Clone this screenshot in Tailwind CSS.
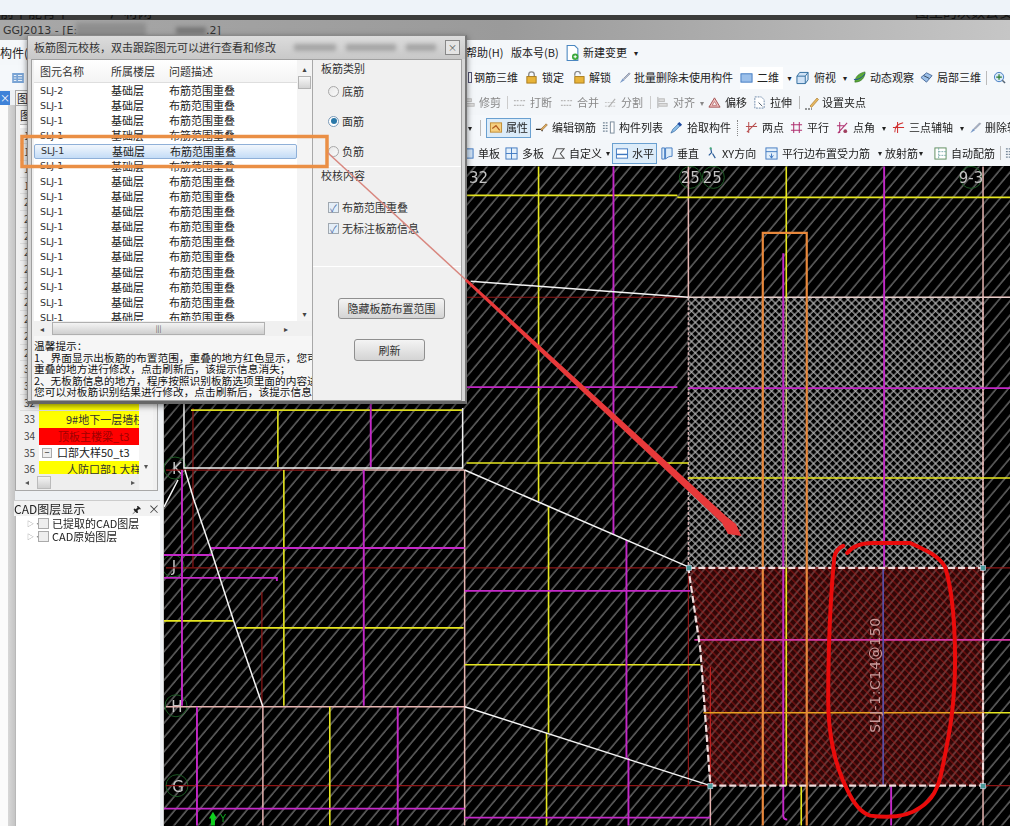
<!DOCTYPE html>
<html lang="zh-CN">
<head>
  <meta charset="UTF-8">
  <script src="https://cdn.jsdelivr.net/npm/@tailwindcss/browser@4"></script>
  <title>GGJ2013</title>
</head>
<body class="bg-[#eef3f9]">
  <!-- toolbar icon sprite -->
  <svg class="hidden">
    <symbol id="i-lock" viewBox="0 0 14 14"><path d="M4 6V4a3 3 0 0 1 6 0v2" fill="none" stroke="#888" stroke-width="1.4"/><rect x="2" y="6" width="10" height="7" fill="#e8b43a" stroke="#a87a1a"/></symbol>
    <symbol id="i-unlock" viewBox="0 0 14 14"><path d="M3 5V3.5a3 3 0 0 1 6 0" fill="none" stroke="#888" stroke-width="1.4"/><rect x="3" y="6" width="10" height="7" fill="#e8b43a" stroke="#a87a1a"/></symbol>
    <symbol id="i-brush" viewBox="0 0 14 14"><path d="M2 13l3-5 2 2z" fill="#7a9ac8"/><path d="M6 8l6-6 1 1-6 6z" fill="#b8c8de" stroke="#667"  stroke-width=".6"/></symbol>
    <symbol id="i-2d" viewBox="0 0 14 14"><rect x="1" y="3" width="12" height="9" fill="#9cc0ea" stroke="#3f78c0"/></symbol>
    <symbol id="i-box" viewBox="0 0 14 14"><path d="M1 5h9v8H1zM1 5l3-4h9l-3 4M10 13l3-4V1" fill="#cfe2f6" stroke="#2c6a9c"/></symbol>
    <symbol id="i-orbit" viewBox="0 0 14 14"><path d="M2 12C2 6 7 2 13 1c0 6-4 11-11 11z" fill="#5aa838" stroke="#2c6a20" stroke-width=".6"/><path d="M1 9c4 1 9-2 12-6" fill="none" stroke="#1c4aa0"/></symbol>
    <symbol id="i-part3d" viewBox="0 0 14 14"><path d="M1 7l6-5 6 3-6 7z" fill="#9cc0ea" stroke="#4a6a98"/><path d="M4 5l6 3" stroke="#345"/></symbol>
    <symbol id="i-zoom" viewBox="0 0 14 14"><circle cx="6.5" cy="6.5" r="5" fill="#d8e8f8" stroke="#3f78c0"/><path d="M6.500 3.500v6M3.500 6.500h6" stroke="#2a7a30" stroke-width="1.300"/><path d="M10 10l3 3" stroke="#567" stroke-width="1.600"/></symbol>
    <symbol id="i-break" viewBox="0 0 14 14"><path d="M1 5h5M8 5h5M1 10h12" stroke="#b8b8b8" stroke-dasharray="2 1" stroke-width="1.400"/></symbol>
    <symbol id="i-split" viewBox="0 0 14 14"><path d="M1 11h12M1 7h12" stroke="#c4c4c4" stroke-dasharray="2 1"/><path d="M5 12l7-9" stroke="#b0b0b0" stroke-width="1.200"/></symbol>
    <symbol id="i-align" viewBox="0 0 14 14"><path d="M2 1v12" stroke="#aaa"/><rect x="3" y="3" width="6" height="3" fill="#ddd" stroke="#bbb"/><rect x="3" y="8" width="9" height="3" fill="#ddd" stroke="#bbb"/></symbol>
    <symbol id="i-offset" viewBox="0 0 14 14"><path d="M7 2l6 10H1z" fill="#f2c0c0" stroke="#a05050"/><path d="M7 6l2.500 4h-5z" fill="#fff" stroke="#a05050" stroke-width=".7"/></symbol>
    <symbol id="i-stretch" viewBox="0 0 14 14"><path d="M2 1h7l3 3v9H2z" fill="#fff" stroke="#6a86a8" stroke-dasharray="2 1"/><path d="M6 7l4 4" stroke="#456"/></symbol>
    <symbol id="i-grip" viewBox="0 0 16 14"><path d="M1 13h7" stroke="#333" stroke-dasharray="2 1" stroke-width="1.200"/><path d="M6 10l7-8 1.500 1.500-7 8z" fill="#e8b860" stroke="#a07020" stroke-width=".6"/></symbol>
    <symbol id="i-prop" viewBox="0 0 14 14"><rect x="1" y="2" width="12" height="10" fill="#f6d080" stroke="#c08a30"/><path d="M3 8l4-3 4 5" fill="none" stroke="#b05a20" stroke-width="1.300"/></symbol>
    <symbol id="i-edit" viewBox="0 0 14 14"><path d="M1 9h6l1 2" fill="none" stroke="#222" stroke-width="1.200"/><path d="M6 9l6-6 1.300 1.300-6 6z" fill="#e0b060" stroke="#805020" stroke-width=".6"/></symbol>
    <symbol id="i-list" viewBox="0 0 14 14"><rect x="9" y="1" width="4" height="12" fill="#fff" stroke="#789"/><path d="M1 2h5M1 5h5M1 8h5M1 11h5" stroke="#789" stroke-dasharray="2 1" stroke-width="1.300"/></symbol>
    <symbol id="i-pick" viewBox="0 0 14 14"><path d="M1 13l2-4 6-6 2 2-6 6z" fill="#8cc0ea" stroke="#2a5c98" stroke-width=".7"/><path d="M8 3l2-2 3 3-2 2z" fill="#1c4aa0"/></symbol>
    <symbol id="i-twopt" viewBox="0 0 14 14"><path d="M4 1v12M1 6h12M2 12L12 2" stroke="#b85050" fill="none" stroke-width="1.100"/></symbol>
    <symbol id="i-parallel" viewBox="0 0 14 14"><path d="M4 1v12M10 1v12M1 4h12M1 10h12" stroke="#b03070" fill="none" stroke-width="1.100"/></symbol>
    <symbol id="i-angle" viewBox="0 0 14 14"><path d="M4 1v12M1 5h9M2 13L12 2" stroke="#b03070" fill="none" stroke-width="1.100"/><circle cx="10" cy="11" r="2" fill="#a04060"/></symbol>
    <symbol id="i-three" viewBox="0 0 14 14"><path d="M6 1v12M1 7h12M3 12c0-6 4-9 9-10" stroke="#d03030" fill="none" stroke-width="1.100"/></symbol>
    <symbol id="i-slab" viewBox="0 0 14 14"><rect x="1" y="2" width="12" height="10" fill="#cfe2f6" stroke="#3f78c0"/></symbol>
    <symbol id="i-multi" viewBox="0 0 14 14"><rect x="1" y="1" width="12" height="12" fill="#e4f0fb" stroke="#3f78c0"/><path d="M7 1v12M1 7h12" stroke="#3f78c0"/></symbol>
    <symbol id="i-custom" viewBox="0 0 14 14"><path d="M1 12L5 2h8l-4 5 4 5z" fill="none" stroke="#555" stroke-width="1.100"/></symbol>
    <symbol id="i-horiz" viewBox="0 0 14 14"><rect x="1" y="2" width="12" height="10" fill="#fff" stroke="#3f78c0"/><path d="M1 8h12" stroke="#3f78c0" stroke-width="1.500"/></symbol>
    <symbol id="i-vert" viewBox="0 0 14 14"><path d="M2 1h3v12H2zM6 1h7v9c-3 0-5 1-7 3z" fill="#dcecfa" stroke="#3f78c0"/></symbol>
    <symbol id="i-xy" viewBox="0 0 14 14"><path d="M5 1l1 5-3 3M7 7l3 5" fill="none" stroke="#2a5c98" stroke-width="1.300"/><circle cx="5" cy="1.500" r="1.200" fill="#4a7"/></symbol>
    <symbol id="i-edge" viewBox="0 0 14 14"><rect x="1" y="1" width="12" height="12" fill="#e4f0fb" stroke="#3f78c0"/><path d="M1 5h12M7 7v5M5 9l2 3 2-3" stroke="#3f78c0" fill="none"/></symbol>
    <symbol id="i-auto" viewBox="0 0 14 14"><rect x="1" y="1" width="12" height="12" fill="#fff" stroke="#5a8a5a"/><path d="M5 1v12M5 5h8M5 9h8" stroke="#7aa" stroke-dasharray="2 1"/></symbol>
    <symbol id="i-new" viewBox="0 0 14 14"><path d="M2 0h7l3 3v11H2z" fill="#fff" stroke="#4a86c0"/><circle cx="9.500" cy="10.500" r="3" fill="#3aa83a"/><path d="M9.500 9v3M8 10.500h3" stroke="#fff"/></symbol>
    <symbol id="i-dock" viewBox="0 0 14 12"><rect x="0" y="0" width="14" height="12" fill="#7aa4d4"/><path d="M2 3h3M2 6h3M2 9h3M7 3h5M7 6h5M7 9h5" stroke="#fff"/></symbol>
  </svg>

  <div class="relative w-[1010px] h-[826px] overflow-hidden blur-[0.4px] text-[11px] leading-none text-[#222] font-['Noto_Sans_CJK_SC','DejaVu_Sans',sans-serif]">
    <!-- browser strip + app title -->
    <div class="h-[15px] bg-[#eef3f9]"></div>
    <div class="h-[5px] bg-[#3c3c3c] overflow-hidden flex text-[14px] text-[#111]">
      <span class="-mt-[11px] w-[110px] shrink-0 whitespace-nowrap">前中能育中</span>
      <span class="-mt-[11px] w-[805px] shrink-0 whitespace-nowrap">厂材网</span>
      <span class="-mt-[11px] whitespace-nowrap">图里的次数去安</span>
    </div>
    <div class="h-[20px] bg-gradient-to-r from-[#a8a8a8] via-[#9a9a9a] to-[#c6c6c6] flex items-center pl-[3px] text-[#333]">
      <span class="w-[73px] shrink-0 whitespace-nowrap font-['DejaVu_Sans',sans-serif] text-[11px]">GGJ2013 - [E:</span>
      <span class="w-[70px] h-[14px] bg-[#8e8e8e] blur-[2px] shrink-0"></span>
      <span class="ml-[30px] w-[30px] h-[7px] bg-[#777] blur-[2px] shrink-0"></span>
      <span class="font-['DejaVu_Sans',sans-serif] text-[11px]">.2]</span>
    </div>

    <!-- menu row -->
    <div class="h-[25px] bg-[#f4f7fa] flex items-center">
      <span class="w-[466px] shrink-0 text-[12px]">构件(N)</span>
      <span class="w-[45px] shrink-0">帮助(H)</span>
      <span class="w-[54px] shrink-0">版本号(B)</span>
      <span class="flex items-center gap-[3px]"><svg class="w-[15px] h-[16px]"><use href="#i-new"/></svg>新建变更<span class="ml-[4px] text-[8px]">▾</span></span>
    </div>
    <!-- first toolbar row -->
    <div class="h-[25px] bg-[#f5f8fb] flex items-center overflow-hidden">
      <span class="w-[12px] shrink-0"></span>
      <span class="w-[456px] shrink-0"><svg class="block w-[12px] h-[10px]"><use href="#i-dock"/></svg></span>
      <span class="w-[57px] shrink-0 flex items-center gap-[2px]"><span class="w-[4px] h-[11px] border border-[#557] shrink-0"></span>钢筋三维</span>
      <span class="w-[47px] shrink-0 flex items-center gap-[4px]"><svg class="w-[13px] h-[13px] shrink-0"><use href="#i-lock"/></svg>锁定</span>
      <span class="w-[46px] shrink-0 flex items-center gap-[4px]"><svg class="w-[13px] h-[13px] shrink-0"><use href="#i-unlock"/></svg>解锁</span>
      <span class="w-[122px] shrink-0 flex items-center gap-[3px]"><svg class="w-[13px] h-[13px] shrink-0"><use href="#i-brush"/></svg>批量删除未使用构件</span>
      <span class="w-[43px] h-[22px] shrink-0 flex items-center gap-[4px] bg-white"><svg class="w-[13px] h-[13px] shrink-0"><use href="#i-2d"/></svg>二维</span>
      <span class="w-[13px] shrink-0 text-[8px] text-center">▾</span>
      <span class="w-[47px] shrink-0 flex items-center gap-[5px]"><svg class="w-[13px] h-[14px] shrink-0"><use href="#i-box"/></svg>俯视</span>
      <span class="w-[10px] shrink-0 text-[8px]">▾</span>
      <span class="w-[67px] shrink-0 flex items-center gap-[4px]"><svg class="w-[13px] h-[13px] shrink-0"><use href="#i-orbit"/></svg>动态观察</span>
      <span class="w-[65px] shrink-0 flex items-center gap-[4px]"><svg class="w-[13px] h-[13px] shrink-0"><use href="#i-part3d"/></svg>局部三维</span>
      <span class="w-[7px] h-[14px] shrink-0 border-l border-[#bbb] ml-[1px]"></span>
      <svg class="w-[13px] h-[13px] shrink-0"><use href="#i-zoom"/></svg>
    </div>

    <div class="flex h-[736px]">
      <!-- left dock -->
      <aside class="w-[163px] shrink-0 bg-[#eef1f4] flex flex-col">
        <div class="h-[15px] flex items-center shrink-0">
          <span class="w-[10px] h-[14px] bg-[#3f82d8] text-white text-[10px] text-center leading-[14px]">×</span>
          <span class="ml-[5px] w-[30px] h-[15px] bg-[#f4f4f4] border border-[#aaa] border-b-0 text-[11px] pl-[1px] leading-[14px]">图</span>
        </div>
        <div class="flex flex-1 min-h-0">
          <div class="w-[8px] bg-[#fbfbfb]"></div>
          <div class="w-[7px] bg-gradient-to-r from-[#d8d8d8] to-[#c4c4c4]"></div>
          <div class="flex-1 flex flex-col min-w-0">
            <!-- floor tree panel -->
            <div class="h-[386px] shrink-0 mr-[5px] border border-[#a8a8a8] bg-[#f0f0f0] px-[4px] flex flex-col">
              <div class="h-[19px] shrink-0 text-[11px] leading-[18px] border-b border-[#bbb]">图层</div>
              <div class="flex flex-1 min-h-0">
                <div class="w-[119px] shrink-0">
                  <div class="h-[349px] overflow-hidden flex flex-col justify-end bg-white">
                    <div id="floor-rows" class="-mb-[4px]"></div>
                  </div>
                  <div class="h-[16px] bg-[#eee] flex items-center text-[8px] text-[#555]">
                    <span class="w-[17px] pl-[5px]">◂</span>
                    <span class="w-[14px] h-[13px] bg-gradient-to-b from-[#f4f4f4] to-[#cfcfcf] border border-[#bbb]"></span>
                    <span class="ml-[80px]">▸</span>
                  </div>
                </div>
                <div class="flex-1 bg-[#f4f4f4] flex flex-col justify-end items-center pb-[20px] text-[8px] text-[#555]">▾</div>
              </div>
            </div>
            <div class="h-[9px] shrink-0"></div>
            <!-- CAD layer panel -->
            <div class="h-[16px] shrink-0 flex items-center mr-[3px] -ml-[1px] bg-[#f2f2f2] border-t border-[#ccc] text-[12px]">
              <span class="flex-1">CAD图层显示</span>
              <span class="text-[10px] w-[16px]">🖈</span>
              <span class="text-[12px] w-[12px] text-[#444]">×</span>
            </div>
            <div class="flex-1 mr-[3px] bg-white border-l border-[#b8b8b8] pt-[1px] pl-[11px]">
              <div class="h-[13px] flex items-center"><span class="text-[7px] text-[#888] w-[11px]">▷··</span><span class="w-[11px] h-[11px] bg-[#eee] border border-[#aaa] mr-[3px]"></span>已提取的CAD图层</div>
              <div class="h-[13px] flex items-center"><span class="text-[7px] text-[#888] w-[11px]">▷··</span><span class="w-[11px] h-[11px] bg-[#eee] border border-[#aaa] mr-[3px]"></span>CAD原始图层</div>
            </div>
          </div>
        </div>
      </aside>

      <div class="flex-1 min-w-0 flex flex-col">
        <!-- toolbar rows to the right of the dock -->
        <div class="h-[25px] bg-[#f3f6f9] flex items-center overflow-hidden shrink-0">
          <span class="w-[300px] shrink-0"></span>
          <span class="w-[44px] shrink-0 flex items-center gap-[3px] text-[#888]"><svg class="w-[13px] h-[13px] shrink-0"><use href="#i-align"/></svg>修剪</span>
          <span class="w-[6px] h-[13px] shrink-0 border-l border-[#ccc]"></span>
          <span class="w-[47px] shrink-0 flex items-center gap-[4px] text-[#888]"><svg class="w-[13px] h-[13px] shrink-0"><use href="#i-break"/></svg>打断</span>
          <span class="w-[44px] shrink-0 flex items-center gap-[4px] text-[#888]"><svg class="w-[13px] h-[13px] shrink-0"><use href="#i-break"/></svg>合并</span>
          <span class="w-[46px] shrink-0 flex items-center gap-[4px] text-[#888]"><svg class="w-[13px] h-[13px] shrink-0"><use href="#i-split"/></svg>分割</span>
          <span class="w-[6px] h-[13px] shrink-0 border-l border-[#ccc]"></span>
          <span class="w-[52px] shrink-0 flex items-center gap-[4px] text-[#888]"><svg class="w-[13px] h-[13px] shrink-0"><use href="#i-align"/></svg>对齐<span class="text-[8px] ml-[1px]">▾</span></span>
          <span class="w-[45px] shrink-0 flex items-center gap-[4px]"><svg class="w-[13px] h-[13px] shrink-0"><use href="#i-offset"/></svg>偏移</span>
          <span class="w-[46px] shrink-0 flex items-center gap-[4px]"><svg class="w-[13px] h-[13px] shrink-0"><use href="#i-stretch"/></svg>拉伸</span>
          <span class="w-[5px] h-[13px] shrink-0 border-l border-[#bbb]"></span>
          <span class="flex items-center gap-[2px]"><svg class="w-[16px] h-[14px] shrink-0"><use href="#i-grip"/></svg>设置夹点</span>
        </div>
        <div class="h-[25px] bg-[#f5f8fb] flex items-center overflow-hidden shrink-0">
          <span class="w-[305px] shrink-0"></span>
          <span class="w-[12px] shrink-0 text-[8px]">▾</span>
          <span class="w-[6px] h-[16px] shrink-0 border-l border-[#bbb]"></span>
          <span class="w-[45px] h-[20px] shrink-0 flex items-center justify-center gap-[3px] bg-[#dcecf9] border border-[#6aa0d0]"><svg class="w-[14px] h-[13px] shrink-0"><use href="#i-prop"/></svg>属性</span>
          <span class="w-[4px] shrink-0"></span>
          <span class="w-[67px] shrink-0 flex items-center gap-[4px]"><svg class="w-[13px] h-[13px] shrink-0"><use href="#i-edit"/></svg>编辑钢筋</span>
          <span class="w-[68px] shrink-0 flex items-center gap-[4px]"><svg class="w-[13px] h-[13px] shrink-0"><use href="#i-list"/></svg>构件列表</span>
          <span class="w-[67px] shrink-0 flex items-center gap-[4px]"><svg class="w-[13px] h-[13px] shrink-0"><use href="#i-pick"/></svg>拾取构件</span>
          <span class="w-[8px] h-[16px] shrink-0 border-l border-dotted border-[#888]"></span>
          <span class="w-[45px] shrink-0 flex items-center gap-[4px]"><svg class="w-[13px] h-[13px] shrink-0"><use href="#i-twopt"/></svg>两点</span>
          <span class="w-[46px] shrink-0 flex items-center gap-[4px]"><svg class="w-[13px] h-[13px] shrink-0"><use href="#i-parallel"/></svg>平行</span>
          <span class="w-[56px] shrink-0 flex items-center gap-[4px]"><svg class="w-[13px] h-[13px] shrink-0"><use href="#i-angle"/></svg>点角<span class="text-[8px] ml-[3px]">▾</span></span>
          <span class="w-[76px] shrink-0 flex items-center gap-[4px]"><svg class="w-[13px] h-[13px] shrink-0"><use href="#i-three"/></svg>三点辅轴<span class="text-[8px] ml-[3px]">▾</span></span>
          <span class="flex items-center gap-[3px] whitespace-nowrap"><svg class="w-[14px] h-[13px] shrink-0"><use href="#i-brush"/></svg>删除辅轴</span>
        </div>
        <div class="h-[26px] bg-[#f3f6f9] flex items-center overflow-hidden shrink-0">
          <span class="w-[298px] shrink-0"></span>
          <span class="w-[44px] shrink-0 flex items-center gap-[4px]"><svg class="w-[13px] h-[13px] shrink-0"><use href="#i-slab"/></svg>单板</span>
          <span class="w-[47px] shrink-0 flex items-center gap-[4px]"><svg class="w-[13px] h-[13px] shrink-0"><use href="#i-multi"/></svg>多板</span>
          <span class="w-[60px] shrink-0 flex items-center gap-[4px]"><svg class="w-[13px] h-[13px] shrink-0"><use href="#i-custom"/></svg>自定义<span class="text-[8px]">▾</span></span>
          <span class="w-[45px] h-[21px] shrink-0 flex items-center justify-center gap-[3px] bg-[#dcecf9] border border-[#6aa0d0]"><svg class="w-[14px] h-[13px] shrink-0"><use href="#i-horiz"/></svg>水平</span>
          <span class="w-[3px] shrink-0"></span>
          <span class="w-[46px] shrink-0 flex items-center gap-[4px]"><svg class="w-[13px] h-[13px] shrink-0"><use href="#i-vert"/></svg>垂直</span>
          <span class="w-[59px] shrink-0 flex items-center gap-[3px]"><svg class="w-[13px] h-[13px] shrink-0"><use href="#i-xy"/></svg>XY方向</span>
          <span class="w-[120px] shrink-0 flex items-center gap-[4px]"><svg class="w-[13px] h-[13px] shrink-0"><use href="#i-edge"/></svg>平行边布置受力筋<span class="text-[8px] ml-[4px]">▾</span></span>
          <span class="w-[49px] shrink-0 flex items-center gap-[1px]">放射筋<span class="text-[8px]">▾</span></span>
          <span class="w-[66px] shrink-0 flex items-center gap-[4px]"><svg class="w-[13px] h-[13px] shrink-0"><use href="#i-auto"/></svg>自动配筋</span>
          <span class="w-[5px] h-[14px] shrink-0 border-l border-[#bbb]"></span>
          <svg class="w-[13px] h-[13px] shrink-0"><use href="#i-list"/></svg>
        </div>

        <!-- CAD canvas -->
        <svg class="block w-[847px] h-[660px] bg-black border-l border-[#c8c8c8]" viewBox="163 166 847 660" fill="none">
          <defs>
            <pattern id="hatch" width="9.2" height="9.2" patternUnits="userSpaceOnUse" patternTransform="rotate(40)">
              <path d="M1 0V9.200" stroke="#a8a8a8" stroke-width="0.900"/>
            </pattern>
            <pattern id="hatch-pale" width="6.6" height="6.6" patternUnits="userSpaceOnUse" patternTransform="rotate(40)">
              <path d="M1 0V6.600" stroke="#a87878" stroke-width="0.800"/>
            </pattern>
            <pattern id="cross" width="5.4" height="5.4" patternUnits="userSpaceOnUse" patternTransform="rotate(45)">
              <rect width="5.400" height="5.400" fill="#000"/>
              <path d="M1 0V5.400M0 1H5.400" stroke="#b8b8b8" stroke-width="1.100"/>
            </pattern>
            <pattern id="redbase" width="5.4" height="5.4" patternUnits="userSpaceOnUse" patternTransform="rotate(45)">
              <path d="M0 1H5.400" stroke="#a81818" stroke-width="0.800"/>
            </pattern>
          </defs>
          <rect x="163" y="166" width="847" height="660" fill="url(#hatch)"/>

          <!-- grid bubbles -->
          <g stroke="#1c5a24" stroke-width="1">
            <circle cx="174" cy="468" r="11"/><circle cx="172" cy="566" r="11"/><circle cx="175" cy="706" r="11"/><circle cx="176" cy="786" r="11"/>
            <circle cx="690" cy="177" r="11"/><circle cx="713" cy="177" r="11"/><circle cx="971" cy="177" r="11"/>
          </g>
          <g fill="#c4c4c4" font-size="15" font-family="'DejaVu Sans',sans-serif" text-anchor="middle">
            <text x="176" y="474">K</text><text x="173" y="572">J</text><text x="176" y="712">H</text><text x="177" y="792">G</text>
            <text x="478" y="183">32</text><text x="690" y="183">25</text><text x="712" y="183">25</text><text x="971" y="183">9-3</text>
          </g>

          <!-- crosshatched slab and the overlap area -->
          <rect x="688" y="297" width="295" height="271" fill="url(#cross)"/>
          <path d="M688 568H983V786H710L700 650Z" fill="#300606"/>
          <path d="M688 568H983V786H710L700 650Z" fill="url(#hatch-pale)"/>
          <path d="M688 568H983V786H710L700 650Z" fill="url(#redbase)"/>

          <!-- dark red axis lines -->
          <g stroke="#8e1616" stroke-width="1.200">
            <path d="M466 297H688M192 408V567M165 470H330M165 568H1010M261 592V706M165 786H710M688 568V786M983 786H1010M983 568H1010M983 297H1010"/>
            <path d="M710 667V786" stroke="#c02020"/>
          </g>
          <!-- pale walls -->
          <g stroke="#e6b4b0" stroke-width="1.500">
            <path d="M688 166V297M983 166V826M330 470H464M165 707H464M464 470V826M262 707V826M710 786V826"/>
            <path d="M688 297H1010" stroke="#e8d0cc"/>
            <path d="M688 297V568M983 297V568" stroke="#d8b0b0" stroke-dasharray="3 2"/>
          </g>
          <!-- yellow -->
          <g stroke="#e6e620" stroke-width="1.600">
            <path d="M466 195H677M677 197H1010M538 166V501M786 166V297M466 463H688M688 478H1010"/>
            <path d="M190 410H462M277 410V467M283 470V706M163 621H233M236 628H463M329 707V826"/>
            <path d="M464 665H700M548 506V733M546 733V826M786 568V786M801 786V826M985 713H1010"/>
            <path d="M786 297V568" stroke="#d8d878" stroke-width="1.200"/>
          </g>
          <path d="M703 713H985" stroke="#e8a020" stroke-width="1.400"/>
          <!-- magenta -->
          <g stroke="#c428c8" stroke-width="1.900">
            <path d="M466 387H677M688 388H1010M613 166V535M884 166V568M370 400V467M181 470V706"/>
            <path d="M210 548H464M163 555H211M163 578H276V581M363 470V706M196 707V826M397 707V826"/>
            <path d="M163 809H464M464 818H710M464 591H690M626 540V758M628 758V826"/>
            <path d="M783 253V816Q783 820 787 820M891 786V826"/>
            <path d="M694 640H1010" stroke="#d838a8"/>
          </g>
          <path d="M883 568V786" stroke="#5a50b0" stroke-width="1.600"/>
          <!-- orange walls -->
          <path d="M762.500 826V232.500H806.500V826" stroke="#e8883c" stroke-width="2.200"/>
          <!-- white outlines -->
          <g stroke="#f4f4f4" stroke-width="1.500">
            <path d="M470 281L688 297M464 470L688 567M464 707L710 786"/>
            <path d="M183 400V468H462V408M177 480L163 507"/>
            <path d="M184 470L193 500L210 550L233 622L262 707"/>
          </g>
          <!-- selected slab outline -->
          <path d="M688 568H983V786H710L700 650Z" stroke="#f0dcdc" stroke-width="2.200" stroke-dasharray="7 3"/>
          <g fill="#4a9a9a" stroke="#cde" stroke-width=".6">
            <rect x="686" y="565.500" width="5" height="5"/><rect x="980.500" y="565.500" width="5" height="5"/><rect x="707.500" y="784" width="5" height="5"/><rect x="980.500" y="784" width="5" height="5"/>
          </g>
          <text transform="translate(880 733) rotate(-90)" fill="#c89a9a" font-size="14" textLength="115" font-family="'DejaVu Sans',sans-serif">SLJ-1:C14@150</text>
          <!-- Y axis marker -->
          <path d="M212 812L216 819H214V826H210V819H208Z" fill="#10d020"/>
          <text x="219" y="822" fill="#10a020" font-size="10" font-family="'DejaVu Sans',sans-serif">Y</text>
          <!-- freehand red ring -->
          <path d="M843 546C838 548 835 552 834 558C830 600 828 660 828 700C828 730 832 760 847 790C853 803 860 813 870 816C885 818 905 819 920 808C932 800 938 790 942 770C948 740 955 710 955 660C955 620 952 590 945 567C938 555 925 550 910 543H873C862 543 853 545 847 553" stroke="#ea0b0b" stroke-width="4" stroke-linecap="round"/>
        </svg>
      </div>
    </div>

    <!-- check dialog, floats over the app -->
    <div class="absolute left-[27px] top-[35px] w-[440px] h-[369px] bg-[#d6d6d6] border border-[#8a8a8a] border-b-[3px] border-b-[#666] border-r-[2px] border-r-[#777] shadow-[0_2px_6px_rgba(0,0,0,0.5)] px-[3px] flex flex-col">
      <div class="h-[23px] shrink-0 flex items-center text-[11px] text-[#333] bg-gradient-to-b from-[#dcdcdc] to-[#c8c8c8] -mx-[3px] pl-[6px] pr-[5px]">
        <span class="w-[250px] shrink-0 whitespace-nowrap">板筋图元校核，双击跟踪图元可以进行查看和修改</span>
        <span class="ml-[10px] w-[42px] h-[7px] bg-[#a4a4a4] blur-[2px] shrink-0"></span>
        <span class="ml-[10px] w-[50px] h-[7px] bg-[#a4a4a4] blur-[2px] shrink-0"></span>
        <span class="ml-[10px] w-[30px] h-[7px] bg-[#a4a4a4] blur-[2px] shrink-0"></span>
        <span class="ml-auto w-[15px] h-[15px] bg-[#e4e4e4] border border-[#888] text-[9px] text-center leading-[13px] text-[#555]">×</span>
      </div>
      <div class="flex-1 min-h-0 flex bg-[#f0f0f0] border border-[#a0a0a0]">
        <div class="w-[281px] shrink-0 flex flex-col pl-[2px] border-r border-[#a8a8a8]">
          <div class="h-[261px] shrink-0 flex">
            <div class="flex-1 bg-white min-w-0 flex flex-col">
              <div class="h-[23px] shrink-0 flex items-center bg-gradient-to-b from-white to-[#f4f4f4] border-b border-[#dedede] text-[#333]">
                <span class="w-[77px] pl-[6px]">图元名称</span>
                <span class="w-[58px]">所属楼层</span>
                <span>问题描述</span>
              </div>
              <div id="check-rows" class="flex-1 overflow-hidden"></div>
            </div>
            <div class="w-[15px] bg-[#f4f4f4] flex flex-col items-center text-[8px] text-[#444] pt-[5px]">
              <span>▴</span>
              <span class="mt-[3px] w-[13px] h-[13px] bg-gradient-to-b from-[#f8f8f8] to-[#d4d4d4] border border-[#b4b4b4]"></span>
              <span class="mt-auto mb-[3px]">▾</span>
            </div>
          </div>
          <div class="h-[15px] shrink-0 bg-[#f0f0f0] flex items-center text-[8px] text-[#444]">
            <span class="w-[18px] pl-[6px]">◂</span>
            <span class="w-[213px] h-[13px] bg-gradient-to-b from-[#f4f4f4] to-[#cfcfcf] border border-[#b0b0b0] text-center leading-[11px] text-[7px]">|||</span>
            <span class="ml-[19px]">▸</span>
          </div>
          <div class="flex-1 overflow-hidden whitespace-nowrap text-[10.7px] leading-[11.6px] text-[#111] pt-[4px] bg-[#f6f6f6]">
            <p>温馨提示：</p>
            <p>1、界面显示出板筋的布置范围，重叠的地方红色显示，您可</p>
            <p>重叠的地方进行修改，点击刷新后，该提示信息消失；</p>
            <p>2、无板筋信息的地方，程序按照识别板筋选项里面的内容进</p>
            <p>您可以对板筋识别结果进行修改，点击刷新后，该提示信息</p>
          </div>
        </div>
        <div class="flex-1 text-[#333]">
          <div class="h-[16px] pl-[8px] leading-[16px]">板筋类别</div>
          <label class="h-[30px] flex items-center pl-[15px] gap-[3px]"><span class="w-[11px] h-[11px] rounded-full bg-gradient-to-br from-[#e8e8e8] to-[#fafafa] border border-[#a8a8a8]"></span>底筋</label>
          <label class="h-[30px] flex items-center pl-[15px] gap-[3px]"><span class="w-[11px] h-[11px] rounded-full bg-white border border-[#7a9ab8] flex items-center justify-center"><span class="w-[6px] h-[6px] rounded-full bg-[#2a78a8]"></span></span>面筋</label>
          <label class="h-[30px] flex items-center pl-[15px] gap-[3px]"><span class="w-[11px] h-[11px] rounded-full bg-gradient-to-br from-[#e8e8e8] to-[#fafafa] border border-[#a8a8a8]"></span>负筋</label>
          <div class="border-t border-white pl-[8px] h-[17px] leading-[16px]">校核内容</div>
          <label class="mt-[14px] h-[21px] flex items-center pl-[15px] gap-[3px]"><span class="w-[11px] h-[11px] bg-[#e4eef8] border border-[#a0a8b0] text-[10px] leading-[9px] text-center text-[#4a6aa0]">✓</span>布筋范围重叠</label>
          <label class="h-[21px] flex items-center pl-[15px] gap-[3px]"><span class="w-[11px] h-[11px] bg-[#e4eef8] border border-[#a0a8b0] text-[10px] leading-[9px] text-center text-[#4a6aa0]">✓</span>无标注板筋信息</label>
          <div class="mt-[27px] border-t border-white"></div>
          <button class="block mt-[31px] ml-[25px] w-[107px] h-[21px] rounded-[3px] border border-[#8f8f8f] bg-gradient-to-b from-[#f4f4f4] to-[#d4d4d4] text-[11px] text-[#333]">隐藏板筋布置范围</button>
          <button class="block mt-[20px] ml-[41px] w-[71px] h-[22px] rounded-[3px] border border-[#8f8f8f] bg-gradient-to-b from-[#f4f4f4] to-[#d4d4d4] text-[11px] text-[#333]">刷新</button>
        </div>
      </div>
    </div>

    <!-- hand-drawn marks on top of the screenshot -->
    <svg class="absolute left-0 top-0 w-[1010px] h-[826px]" viewBox="0 0 1010 826" fill="none">
      <rect x="22" y="136.500" width="305" height="30" stroke="#ea8f45" stroke-width="3.500"/>
      <path d="M328 153L466 280" stroke="#d9877f" stroke-width="1.500"/>
      <path d="M467 279L727 517L736 524L741.500 536L728 534L722 523L465 281Z" fill="#e8393a"/>
    </svg>
  </div>

  <script>
    // rows of the check list
    const checkRows = document.getElementById('check-rows');
    const names = ['SLJ-2'];
    for (let i = 0; i < 15; i++) names.push('SLJ-1');
    checkRows.innerHTML = names.map((name, i) => {
      const selected = i === 4;
      const rowClass = selected
        ? 'h-[15.13px] flex items-center rounded-[2px] border border-[#8fb0d8] bg-gradient-to-b from-[#f2f7fd] to-[#c4dcf6]'
        : 'h-[15.13px] flex items-center';
      return `<div class="${rowClass}">
        <span class="w-[77px] pl-[6px] text-[9.5px] font-['DejaVu_Sans',sans-serif] text-[#333]">${name}</span>
        <span class="w-[58px]">基础层</span>
        <span>布筋范围重叠</span>
      </div>`;
    }).join('');

    // floor tree: only the last rows show beside the dialog
    const floorRows = document.getElementById('floor-rows');
    let html = '';
    for (let n = 16; n <= 32; n++) {
      html += `<div class="h-[16.7px] flex border-b border-[#ddd]"><span class="w-[19px] bg-[#f0f0f0] text-center text-[10px] leading-[16px] text-[#444]">${n}</span><span class="flex-1 bg-[#ffff00]"></span></div>`;
    }
    html += `
      <div class="h-[16.7px] flex whitespace-nowrap overflow-hidden"><span class="w-[19px] shrink-0 bg-[#f0f0f0] text-center text-[10px] leading-[16px] text-[#444]">33</span><span class="flex-1 bg-[#ffff00] pl-[27px] leading-[16px] text-[#333]">9#地下一层墙柱</span></div>
      <div class="h-[16.7px] flex whitespace-nowrap overflow-hidden"><span class="w-[19px] shrink-0 bg-[#f0f0f0] text-center text-[10px] leading-[16px] text-[#444]">34</span><span class="flex-1 bg-[#ff0000] pl-[19px] leading-[16px] text-[#a00000]">顶板主楼梁_t3</span></div>
      <div class="h-[16.7px] flex whitespace-nowrap overflow-hidden"><span class="w-[19px] shrink-0 bg-[#f0f0f0] text-center text-[10px] leading-[16px] text-[#444]">35</span><span class="flex-1 bg-white pl-[3px] flex items-center gap-[5px]"><span class="w-[10px] h-[10px] bg-[#eee] border border-[#aaa] text-[9px] leading-[8px] text-center">−</span>口部大样50_t3</span></div>
      <div class="h-[16.7px] flex whitespace-nowrap overflow-hidden"><span class="w-[19px] shrink-0 bg-[#f0f0f0] text-center text-[10px] leading-[16px] text-[#444]">36</span><span class="flex-1 bg-[#ffff00] pl-[28px] leading-[16px] text-[#333]">人防口部1 大样</span></div>`;
    floorRows.innerHTML = html;
  </script>
</body>
</html>
